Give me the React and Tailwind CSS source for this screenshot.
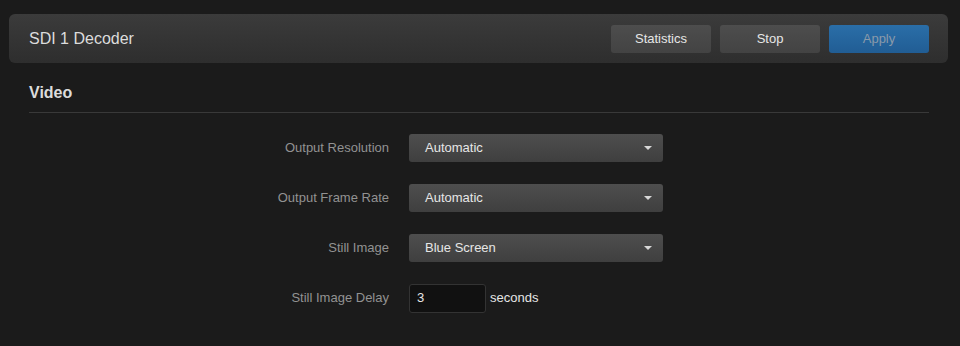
const fontStack = { fontFamily: '"Liberation Sans", Arial, sans-serif' };

function Caret() {
  return (
    <svg width="8" height="4" viewBox="0 0 8 4" className="shrink-0">
      <path d="M0 0h8L4 4z" fill="#d8d8d8" />
    </svg>
  );
}

function SelectBox({ value }) {
  return (
    <div className="w-[254px] h-[28px] rounded-[3px] bg-gradient-to-b from-[#4e4e4e] to-[#3f3f3f] flex items-center justify-between pl-[16px] pr-[11px] text-[13px] text-[#e6e6e6]">
      <span>{value}</span>
      <Caret />
    </div>
  );
}

function Row({ label, children }) {
  return (
    <div className="flex items-center h-[28px]">
      <div className="w-[389px] text-right text-[13px] text-[#929292]">{label}</div>
      <div className="ml-[20px] flex items-center">{children}</div>
    </div>
  );
}

export default function App() {
  return (
    <div className="min-h-screen bg-[#1b1b1b] pt-[14px] px-[9px]" style={fontStack}>
      <div className="h-[49px] w-[939px] rounded-[6px] bg-gradient-to-b from-[#3b3b3b] to-[#2e2e2e] flex items-center justify-between pl-[20px] pr-[19px]">
        <h1 className="text-[16px] text-[#dcdcdc]">SDI 1 Decoder</h1>
        <div className="flex gap-[9px]">
          <button className="w-[100px] h-[28px] rounded-[3px] bg-gradient-to-b from-[#4d4d4d] to-[#434343] text-[13px] text-[#e6e6e6]">
            Statistics
          </button>
          <button className="w-[100px] h-[28px] rounded-[3px] bg-gradient-to-b from-[#4d4d4d] to-[#434343] text-[13px] text-[#e6e6e6]">
            Stop
          </button>
          <button className="w-[100px] h-[28px] rounded-[3px] bg-gradient-to-b from-[#2a6ea8] to-[#215d94] text-[13px] text-[#8a9aaa]">
            Apply
          </button>
        </div>
      </div>

      <div className="px-[20px]">
        <h2 className="pt-[18px] h-[49px] text-[16px] font-bold text-[#dcdcdc]">Video</h2>
        <div className="h-px bg-[#393939] w-[900px]" />
        <div className="pt-[21px] flex flex-col gap-[22px] -ml-[29px]">
          <Row label="Output Resolution">
            <SelectBox value="Automatic" />
          </Row>
          <Row label="Output Frame Rate">
            <SelectBox value="Automatic" />
          </Row>
          <Row label="Still Image">
            <SelectBox value="Blue Screen" />
          </Row>
          <Row label="Still Image Delay">
            <div className="w-[77px] h-[29px] rounded-[3px] bg-[#111111] border border-[#333333] flex items-center pl-[7px] text-[13px] text-[#e6e6e6]">
              3
            </div>
            <span className="ml-[4px] text-[13px] text-[#e6e6e6]">seconds</span>
          </Row>
        </div>
      </div>
    </div>
  );
}
